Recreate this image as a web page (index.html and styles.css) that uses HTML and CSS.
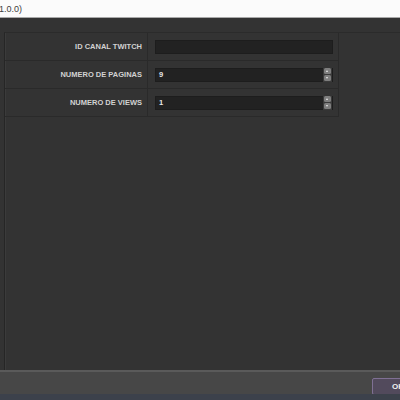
FILE: index.html
```html
<!DOCTYPE html>
<html>
<head>
<meta charset="utf-8">
<link rel="stylesheet" href="styles.css">
</head>
<body>
<div class="window">
  <div class="titlebar"><span class="title">1.0.0)</span></div>
  <div class="main">
    <div class="frame">
      <div class="grid">
        <div class="row">
          <div class="label">ID CANAL TWITCH</div>
          <div class="field"><div class="input"></div></div>
        </div>
        <div class="row">
          <div class="label">NUMERO DE PAGINAS</div>
          <div class="field">
            <div class="input spin"><span class="value">9</span>
              <span class="spinbtns"><span class="sb up"></span><span class="sb down"></span></span>
            </div>
          </div>
        </div>
        <div class="row">
          <div class="label">NUMERO DE VIEWS</div>
          <div class="field">
            <div class="input spin"><span class="value">1</span>
              <span class="spinbtns"><span class="sb up"></span><span class="sb down"></span></span>
            </div>
          </div>
        </div>
      </div>
    </div>
  </div>
  <div class="footer"><div class="ok">OK</div></div>
  <div class="taskbar"></div>
</div>
</body>
</html>
```
FILE: styles.css
```css
html, body {
  margin: 0;
  padding: 0;
  width: 400px;
  height: 400px;
  overflow: hidden;
  background: #333;
}
.window {
  width: 400px;
  height: 400px;
  display: flex;
  flex-direction: column;
  font-family: "Liberation Sans", Arial, sans-serif;
}
.titlebar {
  height: 17px;
  background: #fbfbfb;
  border-bottom: 1px solid #a9a9a9;
  display: flex;
  align-items: center;
}
.title {
  font-size: 9px;
  color: #3e3e3e;
  margin-left: -1px;
}
.main {
  height: 352px;
  background: #333333;
  padding: 14px 0 0 4px;
  box-sizing: border-box;
  display: flex;
}
.frame {
  flex: 1;
  border-left: 1px solid #262626;
  border-top: 1px solid #2b2b2b;
  box-shadow: inset 1px 0 0 #3b3b3b;
}
.grid {
  width: 333px;
  border-right: 1px solid #2a2a2a;
  display: flex;
  flex-direction: column;
}
.row {
  height: 27px;
  border-bottom: 1px solid #2a2a2a;
  display: flex;
}
.label {
  width: 143px;
  padding-right: 5px;
  box-sizing: border-box;
  display: flex;
  align-items: center;
  justify-content: flex-end;
  font-size: 7.5px;
  font-weight: bold;
  color: #d2d2d2;
  border-right: 1px solid #2a2a2a;
  white-space: nowrap;
}
.field {
  flex: 1;
  display: flex;
  align-items: center;
  padding-left: 7px;
  padding-right: 5px;
}
.input {
  flex: 1;
  height: 14px;
  background: #222222;
  border: 1px solid #1d1d1d;
  box-sizing: border-box;
  display: flex;
  align-items: center;
  position: relative;
}
.value {
  font-size: 7.5px;
  font-weight: bold;
  color: #e6e6e6;
  padding-left: 3px;
}
.spinbtns {
  position: absolute;
  right: 0;
  top: -1px;
  width: 9px;
  height: 14px;
  display: flex;
  flex-direction: column;
  background: #3a3a3a;
}
.sb {
  flex: 1;
  margin: 0.5px 1px;
  background: #7e7e7e;
  border-radius: 1.5px;
  position: relative;
}
.sb::after {
  content: "";
  position: absolute;
  left: 2px;
  width: 0;
  height: 0;
  border-left: 1.5px solid transparent;
  border-right: 1.5px solid transparent;
}
.sb.up::after {
  top: 2px;
  border-bottom: 2px solid #ececec;
}
.sb.down::after {
  top: 2px;
  border-top: 2px solid #ececec;
}
.footer {
  height: 22px;
  border-top: 2px solid #5a5a5a;
  background: #474747;
  display: flex;
  justify-content: flex-end;
  align-items: flex-end;
}
.ok {
  width: 40px;
  height: 17px;
  margin-right: -12px;
  margin-bottom: -1px;
  box-sizing: border-box;
  border: 1px solid #7f7094;
  border-radius: 2px;
  background: #524a5c;
  color: #f0f0f0;
  font-size: 8px;
  font-weight: bold;
  padding-left: 19px;
  display: flex;
  align-items: center;
}
.taskbar {
  height: 6px;
  background: #3c414b;
}
```
